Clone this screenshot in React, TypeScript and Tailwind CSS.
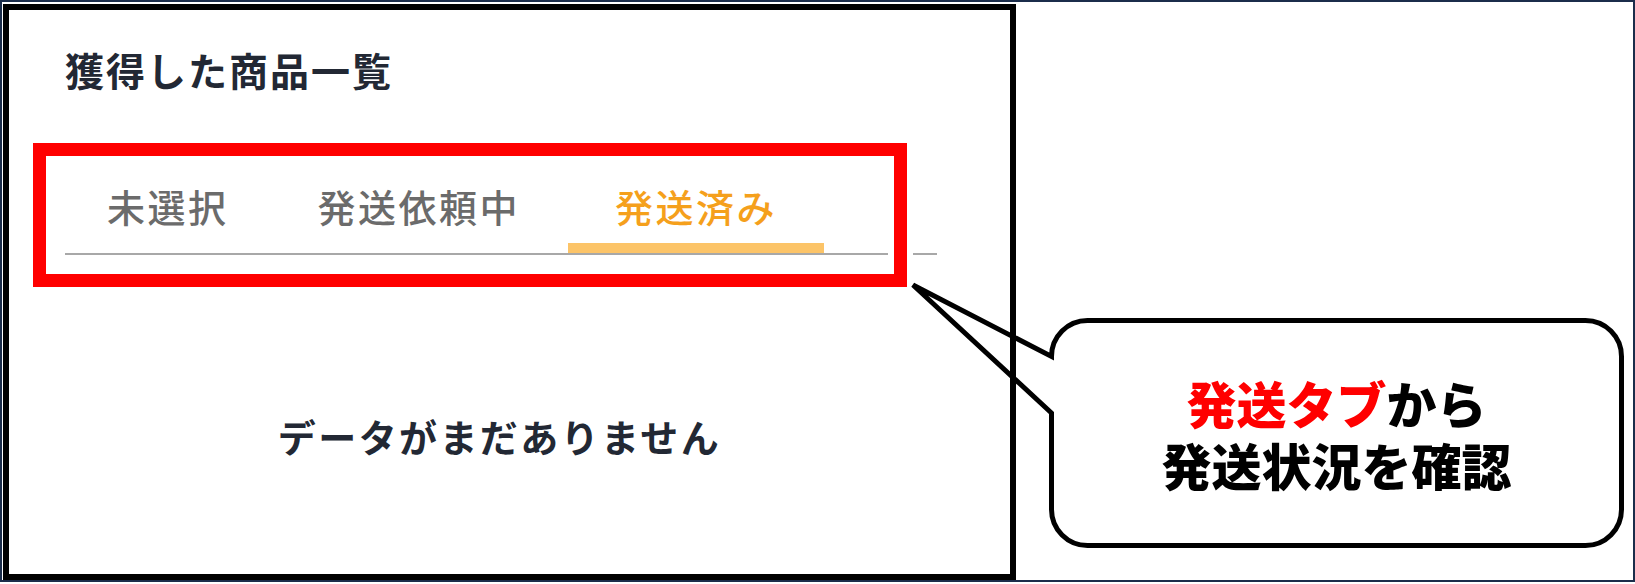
import React from "react";

export default function App() {
  return (
    <div className="relative w-[1635px] h-[584px] bg-white overflow-hidden font-['Noto_Sans_CJK_JP','Noto_Sans',sans-serif]">
      <div className="h-[582px] border-2 border-[#1b2d4b] flex">
        <div className="ml-px mt-[2px] w-[1013px] h-[576px] border-[6px] border-black flex flex-col">
          <h1 className="mt-[39px] ml-[56px] text-[39px] leading-[40px] tracking-[2px] font-bold text-[#222834]">
            獲得した商品一覧
          </h1>
          <div className="mt-[97px] ml-[56px] w-[872px] border-b-2 border-[#a8a8a8] flex items-start text-[38px] leading-[40px] tracking-[2.5px] font-medium">
            <div className="pl-[42px] pb-[17px] border-b-[10px] border-transparent text-[#6b6b6b]">未選択</div>
            <div className="ml-[89px] pb-[17px] border-b-[10px] border-transparent text-[#6b6b6b]">発送依頼中</div>
            <div className="ml-[48px] w-[256px] pb-[17px] border-b-[10px] border-[#fcc468] text-center text-[#f5a01c]">
              発送済み
            </div>
          </div>
          <div className="mt-[161px] w-[981px] text-center text-[38px] leading-[40px] tracking-[2.4px] font-bold text-[#222834]">
            データがまだありません
          </div>
        </div>
      </div>

      {/* red annotation frame */}
      <div className="absolute left-[33px] top-[143px] w-[874px] h-[144px] border-[13px] border-[#ff0000] shadow-[0_0_0_6px_#ffffff,inset_0_0_0_6px_#ffffff]" />

      {/* callout bubble outline */}
      <svg className="absolute left-0 top-0 pointer-events-none" width="1635" height="584" viewBox="0 0 1635 584">
        <path
          d="M 1051.5 356.5 A 36 36 0 0 1 1087.5 320.5 L 1585.5 320.5 A 36 36 0 0 1 1621.5 356.5 L 1621.5 509.5 A 36 36 0 0 1 1585.5 545.5 L 1087.5 545.5 A 36 36 0 0 1 1051.5 509.5 L 1051.5 413 L 913 285 Z"
          fill="none"
          stroke="#000"
          strokeWidth="5"
          strokeLinejoin="miter"
        />
      </svg>

      {/* callout text */}
      <div className="absolute left-[1049px] top-[318px] w-[575px] h-[230px] flex flex-col items-center justify-center gap-[2px] text-[50px] leading-[60px] font-black text-black">
        <div>
          <span className="text-[#ff0000]">発送タブ</span>から
        </div>
        <div>発送状況を確認</div>
      </div>
    </div>
  );
}
